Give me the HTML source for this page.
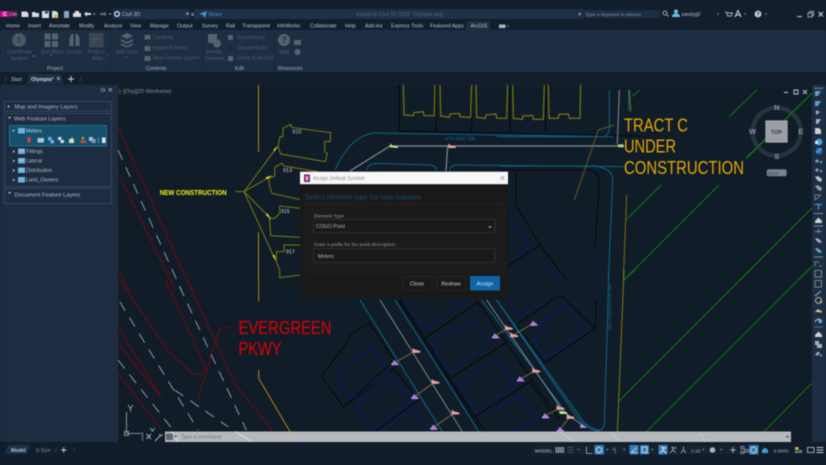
<!DOCTYPE html>
<html><head><meta charset="utf-8"><style>
html,body{margin:0;padding:0;background:#121e2c;width:826px;height:465px;overflow:hidden}
svg{display:block;font-family:"Liberation Sans",sans-serif;filter:blur(.4px)}
</style></head><body>
<svg width="826" height="465" viewBox="0 0 826 465" xmlns="http://www.w3.org/2000/svg">
<defs>
<path id="pk" d="M-10,-9 L-3,-4 L13,0 L13,5 L-10,6z" fill="#eea2a2"/>
<path id="pu" d="M-11,5 L-4,-1 L-2,-8 L3,-3 L13,5 L13,8 L-6,9z" fill="#b07fe6"/>
</defs>
<rect width="826" height="465" fill="#101c28"/>

<!-- drawing: left/centre -->
<g transform="translate(118 90) scale(.33333)" fill="none" stroke-width="3">
 <g stroke="#7d7c0e">
  <path d="M480,170 486,140 495,140 495,115 518,103 520,112 638,128 636,155 620,155 620,185 628,190 622,215 488,192z"/>
  <path d="M600,245 498,228 492,220 470,232 470,258 452,265 455,290 462,310 545,328"/>
  <path d="M550,355 485,348 485,370 470,385 455,385 455,390 458,437 548,442"/>
  <path d="M548,465 498,465 498,485 475,485 475,515 485,540 485,563 548,555"/>
  <path d="M352,305H378L478,170M378,305 460,258M378,305 458,385M378,305 472,510"/>
 </g>
 <path d="M478,168 470,184 466,180zM462,256 446,268 443,262zM458,388 443,374 449,370zM474,512 463,496 469,494z" fill="#e8e820"/>
 <g stroke="#75090f">
  <path d="M0,110 220,600"/>
  <path d="M0,250 172,600"/>
  <path d="M0,540 35,600"/>
 </g>
 <path d="M0,180 190,600" stroke="#aab2ba" stroke-width="2.500" stroke-dasharray="32 24"/>
</g>
<g transform="translate(118 280) scale(.33333)" fill="none" stroke-width="3">
 <g stroke="#75090f">
  <path d="M143,0 262,262Q250,292 222,280L148,210 5,0"/>
  <path d="M208,0 350,310 470,460"/>
  <path d="M0,140 130,352M0,190 130,352M0,280 130,450"/>
  <path d="M240,355 305,145 335,142"/>
 </g>
 <g stroke="#aab2ba" stroke-width="2.500" stroke-dasharray="32 24">
  <path d="M185,20 385,450"/>
  <path d="M5,65 240,450"/>
  <path d="M0,240 165,450"/>
  <path d="M170,330 330,440"/>
 </g>
 <path d="M422,0V65M422,270V295L525,470" stroke="#ad8a12"/>
</g>
<path d="M258.500,85V152M258.500,232V280" stroke="#ad8a12" fill="none"/>

<!-- top lots and roads -->
<g transform="translate(340 90) scale(.33333)" fill="none" stroke-width="3">
 <g stroke="#04090e">
  <path d="M178,-15V123L900,138M288,-15V125M395,-15V128M510,-15V130M617,-15V132"/>
 </g>
 <g stroke="#7d7c0e" stroke-width="3.500">
  <path d="M190,-15 192,75 220,77 222,68 250,65 252,77 283,77 285,-15"/>
  <path d="M300,-15 302,78 328,82 330,72 358,70 360,80 392,82 395,-15"/>
  <path d="M408,-15 410,82 436,85 438,75 468,72 470,85 500,85 503,-15"/>
  <path d="M518,-15 520,85 547,88 548,78 578,76 580,88 610,88 613,-15"/>
  <path d="M625,-15 627,85 655,85 657,73 685,72 688,85 720,85 722,-15"/>
 </g>
 <g stroke="#0d6488">
  <path d="M-15,240Q30,140 100,129L820,140"/>
  <path d="M80,240Q85,220 110,220L270,225Q290,228 290,243"/>
  <path d="M330,243Q330,225 350,225L850,230"/>
 </g>
 <g stroke="#868e96" stroke-width="3.500">
  <path d="M30,243 150,168H835M318,243 323,168"/>
 </g>
 <text x="315" y="152" font-size="16" fill="#10688f" stroke="none" textLength="90" lengthAdjust="spacingAndGlyphs">4TH WAY SW</text>
 <path d="M150,160 156,166 174,169 174,174 150,172z" fill="#b9e88e"/>
 <path d="M325,160 331,166 347,170 347,174 325,174z" fill="#eea2a2"/>
</g>
<g transform="translate(500 90) scale(.33333)" fill="none" stroke-width="3">
 <path d="M358,0 352,162" stroke="#868e96"/>
 <path d="M352,165 372,169" stroke="#868e96"/>
 <path d="M355,163h16v9h-16z" fill="#a8e080"/>
 <path d="M-10,140H305Q328,140 328,110V0" stroke="#0d6488"/>
 <path d="M0,228H285Q338,235 338,270L325,570" stroke="#0d6488"/>
 <path d="M0,240H270Q298,245 298,280L285,470" stroke="#04090e"/>
 <path d="M386,0V62" stroke="#0d6488"/>
 <path d="M388,0 392,65" stroke="#7d7c0e"/>
 <path d="M343,105 295,120 223,330" stroke="#6b5a1e"/>
 <path d="M380,315 370,570" stroke="#7d6d15"/>
 <g stroke="#0e7a12">
  <path d="M395,20 420,0M688,80 770,0M740,205 940,5M380,388 483,285M372,570 657,285M720,570 940,350M895,570 940,525"/>
 </g>
 <path d="M25,380 90,468 25,515M115,515 190,570M30,375 -10,395" stroke="#0a1a78" stroke-width="2.500"/>
 <path d="M48,240V345L120,465 200,570M-10,395 30,375M120,465 20,530" stroke="#04090e"/>
</g>
<g transform="translate(500 270) scale(.33333)" fill="none" stroke-width="3">
 <g stroke="#0e7a12">
  <path d="M372,30 405,0M357,393 750,0M430,495 925,0M790,487 935,340"/>
 </g>
 <path d="M372,0 352,490" stroke="#7d7c0e"/>
 <path d="M327,0 313,460Q310,483 290,482Q260,478 230,440L-10,90" stroke="#0d6488"/>
 <text transform="translate(335 182) rotate(-90)" font-size="14" fill="#10688f" stroke="none" textLength="140" lengthAdjust="spacingAndGlyphs">SPLITWOOD DR SW</text>
</g>
<g transform="translate(300 300) scale(.33333)" fill="none" stroke-width="3">
 <g stroke="#04090e">
  <path d="M65,228 150,115 150,105 208,68 282,180 130,322z"/>
  <path d="M130,322 282,205 355,300 210,405"/>
  <path d="M300,0 375,115 535,5"/>
  <path d="M375,115 450,235 615,130"/>
  <path d="M450,235 525,350 690,245"/>
  <path d="M525,350 560,400"/>
  <path d="M655,70 780,-15M780,-15 885,85 735,188 650,75"/>
  <path d="M885,85 890,0"/>
  <path d="M690,245 750,330"/>
  <path d="M295,0 530,370 545,400M530,0 780,360"/>
 </g>
 <g stroke="#0a1a78" stroke-width="2.600">
  <path d="M115,210 220,143 230,175 245,178 248,190 270,215 155,298 125,265 128,250 110,240z"/>
  <path d="M170,320 285,235 295,265 330,310 215,390 185,360 188,345 172,335z"/>
  <path d="M235,395 345,325 355,355 385,395"/>
  <path d="M395,125 465,85 480,95 515,58 565,130 450,218 405,160 408,145z"/>
  <path d="M315,0 370,90 485,10 478,0"/>
  <path d="M475,255 540,210 548,205 590,178 645,255 530,338z"/>
  <path d="M545,350 610,315 660,285 715,360 610,405"/>
  <path d="M720,70 800,10 855,95 735,175 700,118 742,90z"/>
  <path d="M625,0 660,50 735,0"/>
 </g>
 <g stroke="#0e7595" stroke-width="2.600">
  <path d="M180,0 430,400"/>
  <path d="M285,0 540,400"/>
  <path d="M545,0 800,340"/>
  <path d="M590,0 850,365Q870,385 900,392"/>
 </g>
 <g stroke="#8d959c" stroke-width="2.600">
  <path d="M240,0 490,400"/>
  <path d="M560,0 790,335 850,377"/>
 </g>
 <g stroke="#806a32">
  <path d="M283,188 348,152M343,290 405,245M400,382 465,337M585,108 625,83M700,70 640,105M660,237 707,212M735,348 780,323M780,388 810,350"/>
 </g>
 <use href="#pk" x="348" y="153"/><use href="#pk" x="405" y="246"/><use href="#pk" x="465" y="338"/>
 <use href="#pk" x="625" y="84"/><use href="#pk" x="641" y="106"/><use href="#pk" x="707" y="212"/>
 <use href="#pk" x="780" y="324"/><use href="#pk" x="810" y="351"/>
 <use href="#pu" x="283" y="187"/><use href="#pu" x="343" y="289"/><use href="#pu" x="400" y="381"/>
 <use href="#pu" x="585" y="107"/><use href="#pu" x="700" y="69"/><use href="#pu" x="660" y="236"/>
 <use href="#pu" x="735" y="347"/><use href="#pu" x="780" y="388"/>
 <path d="M777,333 800,336 802,342 780,342z" fill="#c0f090"/>
 <path d="M841,372 850,376 862,383 841,384z" fill="#a89ae8"/>
 <text x="505" y="400" font-size="14" fill="#10688f" stroke="none" transform="rotate(55 505 400)">SW</text>
</g>

<!-- labels -->
<g fill="#e6a800">
 <text x="624" y="131.700" font-size="18.500" textLength="64" lengthAdjust="spacingAndGlyphs">TRACT C</text>
 <text x="624" y="152.700" font-size="18.500" textLength="52" lengthAdjust="spacingAndGlyphs">UNDER</text>
 <text x="624" y="174" font-size="18.500" textLength="120" lengthAdjust="spacingAndGlyphs">CONSTRUCTION</text>
</g>
<g fill="#e00000">
 <text x="238.500" y="334" font-size="18.500" textLength="93" lengthAdjust="spacingAndGlyphs">EVERGREEN</text>
 <text x="238.500" y="355" font-size="18.500" textLength="43" lengthAdjust="spacingAndGlyphs">PKWY</text>
</g>
<text x="159.700" y="195" font-size="7.500" font-weight="bold" fill="#f4f410" textLength="67" lengthAdjust="spacingAndGlyphs">NEW CONSTRUCTION</text>
<g font-size="5.500" fill="#c8d2d4">
 <text x="292.300" y="133.500">910</text><text x="283" y="172">913</text><text x="280.700" y="213">915</text><text x="285.700" y="253.500">917</text>
</g>
<text x="119" y="93" font-size="5.200" fill="#8a96a4">[−][Top][2D Wireframe]</text>

<!-- compass -->
<circle cx="776.700" cy="131.700" r="24" fill="none" stroke="#27333f" stroke-width="4.500"/>
<path d="M746,158 812,93" stroke="#0e7a12" fill="none"/>
<rect x="765.700" y="120.700" width="21.600" height="21.600" fill="#9b9fa5" stroke="#b5b9bd" stroke-width=".6"/>
<text x="776.500" y="133.800" font-size="5.400" font-weight="bold" fill="#2a3440" text-anchor="middle">TOP</text>
<g font-size="7.500" font-weight="bold" fill="#8d97a1" text-anchor="middle">
 <text x="776.700" y="110">N</text><text x="752.500" y="134">W</text><text x="800.700" y="134">E</text><text x="776.700" y="159">S</text>
</g>
<rect x="766.700" y="169.300" width="20" height="7" rx="2" fill="#78818d"/>
<text x="773" y="175" font-size="4.600" fill="#3d4755" text-anchor="middle">WCS</text>
<path d="M784,92.500h4M794,90h4v4h-4zM803,90l4,4m0-4l-4,4" stroke="#c8ced4" fill="none" stroke-width=".9"/>

<!-- UCS -->
<g fill="none" stroke="#a9b1b9" stroke-width=".8">
 <path d="M126.500,412V433.500H141"/>
 <rect x="124.500" y="431.500" width="4" height="4"/>
 <path d="M128,405 130.500,408.500 133,405M130.500,408.500V412"/>
 <path d="M150,428 155,433M155,428 150,433"/>
</g>

<!-- command line -->
<rect x="165" y="431.500" width="626" height="10.500" fill="#b6b9bc"/>
<g fill="none" stroke-width=".8" opacity=".9">
 <path d="M235,431.500 252,442M172,431.500 178,442" stroke="#e8ecef"/>
 <path d="M272,432 280,442" stroke="#e8a8a8"/>
 <path d="M288,432 295,442" stroke="#d4c580"/>
 <path d="M560,432 575,442M700,432 705,442M610,432 620,442" stroke="#c8d0e0"/>
</g>
<rect x="141" y="431.500" width="24" height="10.500" fill="#101c28"/>
<rect x="141.500" y="432" width="2" height="9" fill="#47525e"/>
<path d="M146.500,434 151,439M151,434 146.500,439" stroke="#a9b1b9" fill="none"/>
<path d="M155,441 160,436M159,434.500l2,1.500 1.500,-2" stroke="#a9b1b9" fill="none"/>
<rect x="166.500" y="434" width="6" height="5.500" fill="#5d6874" stroke="#38424e" stroke-width=".5"/>
<path d="M174,435.500h3l-1.500,2z" fill="#38424e"/>
<text x="180.500" y="438.500" font-size="5.400" font-style="italic" fill="#6a7684" textLength="41" lengthAdjust="spacing">Type a command</text>
<path d="M786,436h3l-1.500,2z" fill="#38424e"/>

<!-- dialog -->
<rect x="300" y="171.700" width="208" height="126.300" fill="#191919"/>
<rect x="300" y="171.700" width="208" height="12.500" fill="#f8f8f8"/>
<rect x="304" y="174.500" width="6" height="7.500" fill="#85156e"/>
<rect x="305.500" y="176" width="3" height="4.500" fill="#d8a0d0"/>
<text x="313" y="180.200" font-size="5.100" fill="#8c8c8c">Assign Default Symbol</text>
<path d="M500.500,176l4,4m0-4l-4,4" stroke="#9a9a9a" fill="none" stroke-width=".7"/>
<text x="304.500" y="199.500" font-size="7.600" fill="#0f4a78" textLength="117" lengthAdjust="spacingAndGlyphs">Select element type for new features</text>
<rect x="304.500" y="203.500" width="200" height="68.500" fill="#1b1b1b" stroke="#222"/>
<text x="314" y="217.500" font-size="4.900" fill="#9b9b9b">Element Type</text>
<rect x="313.500" y="219.500" width="181.500" height="13" fill="#1a1a1a" stroke="#2e2e2e"/>
<text x="316" y="228" font-size="5.200" fill="#b0b0b0">COGO Point</text>
<path d="M488,226.200h3.600l-1.800,2z" fill="#9a9a9a"/>
<text x="314" y="246" font-size="4.900" fill="#9b9b9b">Enter a prefix for the point description</text>
<rect x="313.500" y="248.500" width="181.500" height="14" fill="#1a1a1a" stroke="#2e2e2e"/>
<text x="318" y="258" font-size="5.200" fill="#b0b0b0">Meters</text>
<rect x="402.500" y="276.500" width="29.500" height="13.500" fill="#191919" stroke="#252525"/>
<text x="417" y="285.500" font-size="5.600" fill="#d0d0d0" text-anchor="middle">Close</text>
<rect x="436.500" y="276.500" width="29.500" height="13.500" fill="#191919" stroke="#252525"/>
<text x="451" y="285.500" font-size="5.600" fill="#d0d0d0" text-anchor="middle">Redraw</text>
<rect x="470" y="276" width="30" height="14.500" fill="#0e65a6"/>
<text x="485" y="285.500" font-size="5.600" fill="#d5e6f2" text-anchor="middle">Assign</text>

<!-- right toolbar -->
<rect x="812" y="85" width="14" height="357" fill="#1e2e42"/>
<rect x="814" y="87.500" width="9" height="1.600" fill="#5f6c7a"/>
<g>
 <path d="M815,91h6l-3,5h-3z" fill="#5f9ac8"/>
 <path d="M815,101h6l-3,5h-3z" fill="#5f9ac8"/>
 <path d="M816,110l4,2 -4,3z" fill="#a0b4c8"/>
 <path d="M816,119h5l-3,5h-2z" fill="#a0b4c8"/>
 <path d="M815,128h4l2,2v4h-6z" fill="#ccd2d8"/>
 <circle cx="819" cy="142" r="3.400" fill="#4aa0dc"/><rect x="815" y="141" width="3" height="3" fill="#dfe6ec"/>
 <circle cx="819" cy="151" r="3.400" fill="#1e70c8"/><path d="M816.500,152.500l5,-4" stroke="#bcd" stroke-width=".7"/>
 <path d="M817,159l2,2 -2,2 -2,-2zM820,161h2v2h-2z" fill="#6da8d4"/>
 <path d="M817,168l2,2 -2,2 -2,-2zM820,170h2v2h-2z" fill="#8b99a8"/>
 <path d="M815,177l3,-1 4,3 -1,3 -3,-1z" fill="#b6c0ca"/>
 <path d="M815,186l3,-1 4,3 -1,3 -3,-1z" fill="#8b99a8"/>
 <path d="M815,200v-5h6M815,200l6,-5" stroke="#7f8e9e" fill="none" stroke-width=".8"/>
 <path d="M815,204.500h7M818.500,204.500v5" stroke="#4ba6e4" fill="none"/>
 <rect x="814" y="213" width="9" height="1" fill="#7f8e9e"/>
 <path d="M815,221l3.500,-3.500 3.500,3.500v2h-7z" fill="#ccd2d8"/>
 <rect x="814" y="225.500" width="9" height="1" fill="#7f8e9e"/>
 <path d="M815,231.500h7M818.500,228.500v5" stroke="#5fa8d8" fill="none" stroke-width=".8"/>
 <path d="M815,239l2,-1 3,2 2,2 -3,1z" fill="#a4b0bc"/>
 <path d="M815,249l2,-1 3,2 2,2 -3,1z" fill="#5fa8d8"/>
 <rect x="814" y="256.500" width="9" height="1" fill="#7f8e9e"/>
 <path d="M815,266v-4h4M822,266h-3" stroke="#8b99a8" fill="none" stroke-width=".8"/>
 <rect x="815" y="270.500" width="6.500" height="6.500" fill="none" stroke="#8b99a8" stroke-width=".8"/>
 <rect x="815" y="280.500" width="6.500" height="6.500" fill="none" stroke="#8b99a8" stroke-width=".8"/>
 <path d="M815,296l6,-5" stroke="#a4b0bc" fill="none"/>
 <circle cx="818.500" cy="300.500" r="3" fill="none" stroke="#a4b0bc"/><circle cx="821" cy="302" r="1.200" fill="#e6b030"/>
 <path d="M815,312l3,-3 3,3z" fill="#ccd2d8"/><circle cx="820.500" cy="311.500" r="1.300" fill="#e6b030"/>
 <path d="M815,322q1,-3 5,-3" stroke="#ccd2d8" fill="none"/><rect x="818.500" y="319.500" width="3.500" height="3.500" fill="#5fa8d8"/>
 <rect x="814" y="326.500" width="9" height="1" fill="#5f6c7a"/>
 <path d="M815,335l3.500,-3.500 3.500,3.500v2h-7z" fill="#ccd2d8"/>
 <path d="M815,341h4v3h3v4h-5v-3h-2z" fill="#a4b0bc"/>
 <path d="M815,355l3,-3.500 2,2 -2,2z" fill="#a4b0bc"/>
 <rect x="820" y="354.500" width="2" height="2" fill="#4aa0dc"/>
</g>

<!-- left panel -->
<rect x="0" y="85" width="118" height="357" fill="#1d2c40"/>
<path d="M101.500,88v4M103,88l2,2 -2,2M108.500,88l3.500,3.500m0,-3.500l-3.500,3.500" stroke="#a8b4c0" fill="none" stroke-width=".7"/>
<rect x="4.500" y="101.500" width="107" height="9.500" fill="none" stroke="#34465b"/>
<rect x="4.500" y="113.500" width="107" height="73" fill="none" stroke="#34465b"/>
<rect x="4.500" y="188.500" width="107" height="15" fill="none" stroke="#34465b"/>
<rect x="9.500" y="125.500" width="97" height="20.500" fill="#15506f" stroke="#2a7898" stroke-width=".8"/>
<g font-size="5.700" fill="#b0bcc8">
 <text x="14.500" y="108.500">Map and Imagery Layers</text>
 <text x="14" y="120.500">Web Feature Layers</text>
 <text x="14.500" y="196.500">Document Feature Layers</text>
</g>
<g font-size="5.200" fill="#b0bcc8">
 <text x="26" y="132.500" fill="#c8d8e2">Meters</text>
 <text x="26" y="153">Fittings</text>
 <text x="26" y="162.500">Lateral</text>
 <text x="26" y="172">Distribution</text>
 <text x="26" y="181.500">Land_Owners</text>
</g>
<g fill="#b6c0ca">
 <path d="M8,105l2,1.500 -2,1.500zM8,117h3l-1.500,2zM8,192h3l-1.500,2zM12,130h3l-1.500,2z"/>
 <path d="M13,150l2,1.500 -2,1.500zM13,159.500l2,1.500 -2,1.500zM13,169l2,1.500 -2,1.500zM13,178.500l2,1.500 -2,1.500z"/>
</g>
<g fill="#6fb0dc">
 <rect x="18" y="128" width="7" height="5.500"/><rect x="18" y="148.500" width="7" height="5.500"/><rect x="18" y="158" width="7" height="5.500"/><rect x="18" y="167.500" width="7" height="5.500"/><rect x="18" y="177" width="7" height="5.500"/>
</g>
<path d="M19,150.500h5M19,160h5M19,169.500h5" stroke="#dfe8f0" stroke-width=".6"/>
<g>
 <rect x="27.500" y="137" width="3" height="5.500" fill="#e04040"/>
 <rect x="37.500" y="138" width="6.500" height="4.500" fill="#b0c4d4"/>
 <rect x="48" y="137" width="3.500" height="3.500" fill="#6fb0dc"/><rect x="50.500" y="140" width="3.500" height="3.500" fill="#6fb0dc"/>
 <rect x="58" y="137" width="3.500" height="3" fill="#cfd8de"/><rect x="60.500" y="140" width="3.500" height="3" fill="#cfd8de"/>
 <path d="M69,143v-4h2l1,-2 1,2h1v4z" fill="#cfe0b0"/>
 <path d="M80,143l2,-4 2,2 2,-1v3z" fill="#d04838"/><rect x="82" y="137" width="2" height="2" fill="#e0b030"/>
 <rect x="89" y="137" width="4" height="4" fill="#b0bcc8"/><rect x="92" y="139" width="3.500" height="4" fill="#7fa0b8"/>
 <rect x="98" y="137.500" width=".7" height="5.500" fill="#8aa"/>
 <rect x="102" y="137.500" width="3.500" height="5.500" fill="#dfe6ec"/>
</g>

<!-- top bars -->
<rect x="0" y="0" width="826" height="85" fill="#121e2c"/>
<rect x="113" y="9" width="77" height="10" fill="#1f3048"/>
<rect x="194" y="9" width="389" height="10" fill="#1f3048"/>
<rect x="583" y="10" width="77" height="8" fill="#1c2c42"/>
<rect x="0" y="11" width="8.500" height="6" fill="#c6128e"/>
<rect x="8.500" y="11" width="8.500" height="6" fill="#6c1a50"/>
<text x="3" y="16" font-size="5" font-weight="bold" fill="#fff">C</text>
<text x="9.500" y="15.700" font-size="3.800" fill="#e8c0d8">C3D</text>
<g fill="#d6dce2">
 <path d="M21.500,11.500h5l2,2v3.500h-7z"/>
 <path d="M32,12h3l1,1h3v4h-7z"/>
 <path d="M42,11h7v7h-7z"/>
 <path d="M52,11h4l2,2v5h-6z"/>
 <rect x="64" y="11" width="5" height="7" rx=".5" fill="#8aa4c0"/>
 <rect x="73" y="13" width="8" height="4" rx=".5"/><rect x="75" y="11" width="4" height="2"/>
 <path d="M84,14l3,-2.500v1.500h4v2h-4v1.500z"/>
 <path d="M107,14l-3,-2.500v1.500h-4v2h4v1.500z" fill="#5c6c7c"/>
 <path d="M93,13.500h2.400l-1.200,1.400zM109,13.500h2.400l-1.200,1.400z"/>
</g>
<rect x="45" y="11.500" width="3" height="2" fill="#1f3048"/>
<rect x="54" y="15" width="3" height="3" fill="#e6a820"/>
<circle cx="117" cy="14" r="2.300" fill="none" stroke="#d6dce2" stroke-width="1.400"/>
<text x="122" y="16.200" font-size="5.300" fill="#b6c0ca">Civil 3D</text>
<path d="M186,13h3l-1.500,2zM191,12.500h3M191,14h3l-1.500,2z" fill="#aab4c0" stroke="#aab4c0" stroke-width=".3"/>
<path d="M199,14l8,-3 -2,7 -2,-3z" fill="#3c96d8"/>
<text x="208" y="16.200" font-size="5.300" fill="#3f98d8">Share</text>
<text x="356" y="16.200" font-size="5.200" fill="#56677a">Autodesk Civil 3D 2023</text>
<text x="413" y="16.200" font-size="5.200" fill="#56677a">Olympia.dwg</text>
<path d="M579,12.500l2,1.500 -2,1.500z" fill="#c0c8d0"/>
<text x="585" y="16" font-size="4.900" font-style="italic" fill="#8a98a6">Type a keyword or phrase</text>
<circle cx="665" cy="13" r="2" fill="none" stroke="#9aa6b2"/><path d="M666.500,14.500l2,2" stroke="#9aa6b2"/>
<circle cx="676" cy="11.500" r="2" fill="#6cc0f0"/><path d="M672,17q0,-3.500 4,-3.500t4,3.500z" fill="#6cc0f0"/>
<text x="681.500" y="16" font-size="5" fill="#b6c0ca">sandyg0</text>
<path d="M717,13.500h2.400l-1.200,1.400zM744,13.500h2.400l-1.200,1.400zM765,13.500h2.400l-1.200,1.400z" fill="#9aa6b2"/>
<path d="M725,12h1.500l1,4h4l1,-3h-5.500" stroke="#aab4c0" fill="none" stroke-width=".9"/>
<path d="M735,17l3,-6.500 3,6.500M736,15h4" stroke="#d0d6dc" fill="none" stroke-width="1.100"/>
<circle cx="758" cy="14" r="3.400" fill="#c8ced4"/><text x="758" y="16" font-size="5" font-weight="bold" fill="#121e2c" text-anchor="middle">?</text>
<path d="M797,16.500h5" stroke="#c0c8d0"/>
<path d="M808,13h4v4h-4zM809.500,13v-1.500h4v4h-1.500" stroke="#c0c8d0" fill="none" stroke-width=".8"/>
<path d="M818.500,12l4.500,4.500m0,-4.500l-4.500,4.500" stroke="#d0d6dc" fill="none"/>

<!-- menu tabs -->
<rect x="466" y="21" width="24" height="9" fill="#1e2e42"/>
<g font-size="5.200" fill="#bac4ce">
 <text x="6" y="27.500">Home</text><text x="28" y="27.500">Insert</text><text x="49" y="27.500">Annotate</text><text x="79" y="27.500">Modify</text><text x="104" y="27.500">Analyze</text><text x="130" y="27.500">View</text><text x="150" y="27.500">Manage</text><text x="177" y="27.500">Output</text><text x="202" y="27.500">Survey</text><text x="226" y="27.500">Rail</text><text x="242" y="27.500">Transparent</text><text x="277" y="27.500">InfoWorks</text><text x="310" y="27.500">Collaborate</text><text x="345" y="27.500">Help</text><text x="365" y="27.500">Add-ins</text><text x="391" y="27.500">Express Tools</text><text x="430" y="27.500">Featured Apps</text><text x="470.500" y="27.500">ArcGIS</text>
</g>
<rect x="499" y="24.500" width="6.500" height="3.500" fill="#aab4c0"/><path d="M507,25.500h2l-1,1.300z" fill="#aab4c0"/>

<!-- ribbon -->
<rect x="0" y="30" width="826" height="42" fill="#1e2e42"/>
<path d="M109.500,31V71M202.500,31V71M274.500,31V71" stroke="#18263a"/>
<g font-size="5.100" fill="#4e5e72">
 <text x="7" y="53.500">Coordinate</text><text x="11" y="60">System</text>
 <text x="41" y="53.500">Esri Maps</text><text x="67" y="53.500">Locate</text>
 <text x="88" y="53.500">Project</text><text x="92" y="60">Area</text>
 <text x="116" y="53.500">Add Data</text>
 <text x="153" y="39">Contents</text><text x="153" y="49.300">Import Schema</text><text x="153" y="59.600">New Feature Layer</text>
 <text x="206" y="53.500">Identify</text><text x="205" y="60">Features</text>
 <text x="237" y="39">Synchronize</text><text x="237" y="49.300">Discard Edits</text><text x="237" y="59.600">Share to ArcGIS</text>
 <text x="279" y="53.500">Help</text>
</g>
<g font-size="5.100" fill="#a4b0be">
 <text x="47" y="69.800">Project</text><text x="146" y="69.800">Contents</text><text x="235" y="69.800">Edit</text><text x="278" y="69.800">Resources</text>
</g>
<g fill="#56626f">
 <circle cx="19" cy="40" r="6.800"/>
 <rect x="44.500" y="33.500" width="6" height="6"/><rect x="52" y="33.500" width="6" height="6"/><rect x="44.500" y="41" width="6" height="6"/><rect x="52" y="41" width="6" height="6"/>
 <path d="M69.500,46v-8l2,-4h2v12zM75.500,46v-12h2l2,4v8z"/>
 <rect x="89.500" y="33.500" width="13.500" height="13.500" fill="#3a4654" stroke="#4a5562" stroke-width=".5"/>
 <path d="M127,33l6,3 -6,3 -6,-3zM121,39l6,3 6,-3v2l-6,3 -6,-3zM121,43l6,3 6,-3v2l-6,2.500 -6,-2.500z"/>
 <rect x="144.500" y="35" width="6" height="4.500"/>
 <rect x="144.500" y="46" width="6" height="5"/>
 <rect x="144.500" y="56" width="6" height="5"/>
 <rect x="208" y="34" width="9" height="9"/><circle cx="217" cy="43.500" r="4"/>
 <path d="M228,35h5v5h-5zM228,45l5,5M233,45l-5,5M228,56h5v5h-5z"/>
 <circle cx="284" cy="40" r="6"/>
 <rect x="294" y="40" width="7" height="5"/><circle cx="297.500" cy="52" r="3"/>
</g>
<path d="M14,36q5,4 10,0M14,44q5,-4 10,0M19,33v14M12,40h14" stroke="#1e2e42" stroke-width=".6" fill="none"/>
<text x="284" y="43" font-size="9" font-weight="bold" fill="#1e2e42" text-anchor="middle">?</text>
<path d="M93,42l3,-4 3,2" stroke="#56626f" fill="none"/>
<path d="M33,55.500h1.600v1.400H33zM50,55h2l-1,1.300zM107,55h1.600l-.8,1.200zM125,56.500h2.400l-1.200,1.400zM197,57h2.400l-1.200,1.400z" fill="#6a7684"/>

<!-- doc tabs -->
<path d="M26,85l3,-11h32l3,11z" fill="#1e2e42"/>
<text x="11" y="81" font-size="5.200" fill="#bac4ce">Start</text>
<text x="31" y="81" font-size="5.200" font-weight="bold" fill="#d0dae4">Olympia*</text>
<path d="M57,77l3,3m0,-3l-3,3" stroke="#b0bac4" fill="none" stroke-width=".7"/>
<path d="M68,79h6M71,76v6" stroke="#c8d2dc" fill="none" stroke-width="1"/>
<path d="M5,82l1.500,-6M80,82l1.500,-6" stroke="#2a3a4e" fill="none"/>
<rect x="0" y="84" width="826" height="1" fill="#16232f"/>

<!-- status bar -->
<rect x="0" y="442" width="826" height="23" fill="#111d2b"/>
<path d="M5,454l3,-9h22l-3,9z" fill="#1e3045"/>
<text x="11" y="452" font-size="5.200" font-weight="bold" fill="#a8c4dc">Model</text>
<text x="36" y="452" font-size="5.200" fill="#7f909f">0-Size</text>
<path d="M61,450h5.500M63.700,447.300v5.500" stroke="#c0c8d0" fill="none"/>
<path d="M55,453l2,-6M73,453l2,-6" stroke="#2a3a4e" fill="none"/>
<rect x="533" y="445.500" width="207" height="8.500" fill="#15222f"/>
<text x="535" y="452.300" font-size="4.900" font-weight="bold" fill="#8c9aa8">MODEL</text>
<rect x="594.500" y="445" width="9.500" height="9.500" fill="#3a7cb8"/>
<rect x="629.500" y="445" width="9" height="9.500" fill="#3a7cb8"/>
<rect x="640" y="445" width="9" height="9.500" fill="#3a7cb8"/>
<rect x="658.500" y="445" width="9" height="9.500" fill="#3a7cb8"/>
<rect x="749" y="445" width="9.500" height="9.500" fill="#3a7cb8"/>
<g fill="none" stroke="#aab4c0" stroke-width=".8">
 <path d="M556,447v6M558.500,447v6M561,447v6M563.500,447v6M556,448h8M556,450h8M556,452h8"/>
 <path d="M568,447.500h.8M570,447.500h.8M572,447.500h.8M568,450h.8M570,450h.8M572,450h.8M568,452.500h.8M570,452.500h.8M572,452.500h.8"/>
 <path d="M586.500,446.500v7h6"/>
 <circle cx="599" cy="450" r="2.800" stroke="#e4eef6"/>
 <path d="M614,446.500l1.500,7M612,450l4,-1" stroke="#6a7684"/>
 <path d="M631,452.500l6,-5M631,452.500h6" stroke="#e4eef6"/>
 <rect x="642" y="447" width="5" height="5.500" stroke="#e4eef6"/>
 <path d="M660,453l3,-3 -1,-3 3,1.500 1,-1.500M663,450l3,3" stroke="#fff"/>
 <path d="M670,453l3,-3 -1,-3 3,1.500 1,-1.500M673,450l3,3"/>
 <path d="M681,453l2.500,-3 2.500,3M683.500,450v-3.500"/>
 <path d="M730,450h6M733,447v6" stroke="#d0d6dc"/>
 <path d="M741,446.500h3v2.500h-3zM745,449.500h3v2.500h-3zM741,451.500h3v2h-3z"/>
 <circle cx="753.500" cy="450" r="3" stroke="#e4eef6"/>
</g>
<circle cx="712.500" cy="450" r="2.800" fill="#aab4c0"/>
<text x="691" y="452.300" font-size="4.900" fill="#aab4c0">1:16</text>
<text x="773.500" y="452.300" font-size="4.900" fill="#aab4c0">3.5000</text>
<path d="M762,450l3,-2.500 3,2.500v3h-6z" fill="#4a9ad4"/>
<rect x="795" y="447" width="3.500" height="3" fill="#e0b030"/><rect x="798.500" y="450" width="3.500" height="3" fill="#40a048"/><rect x="795" y="451" width="3" height="2" fill="#4a9ad4"/>
<rect x="807.500" y="447.500" width="6.500" height="5" fill="none" stroke="#c0c8d0" stroke-width=".8"/>
<path d="M816.500,447.500h7M816.500,450h7M816.500,452.500h7" stroke="#c0c8d0" fill="none"/>
<path d="M606,449h2.400l-1.200,1.400zM577.500,449h2.400l-1.200,1.400zM623,449h2.400l-1.200,1.400zM651,449h2.400l-1.200,1.400zM702,449h2.400l-1.200,1.400zM720,449h2.400l-1.200,1.400z" fill="#9aa6b2"/>
</svg>
</body></html>
